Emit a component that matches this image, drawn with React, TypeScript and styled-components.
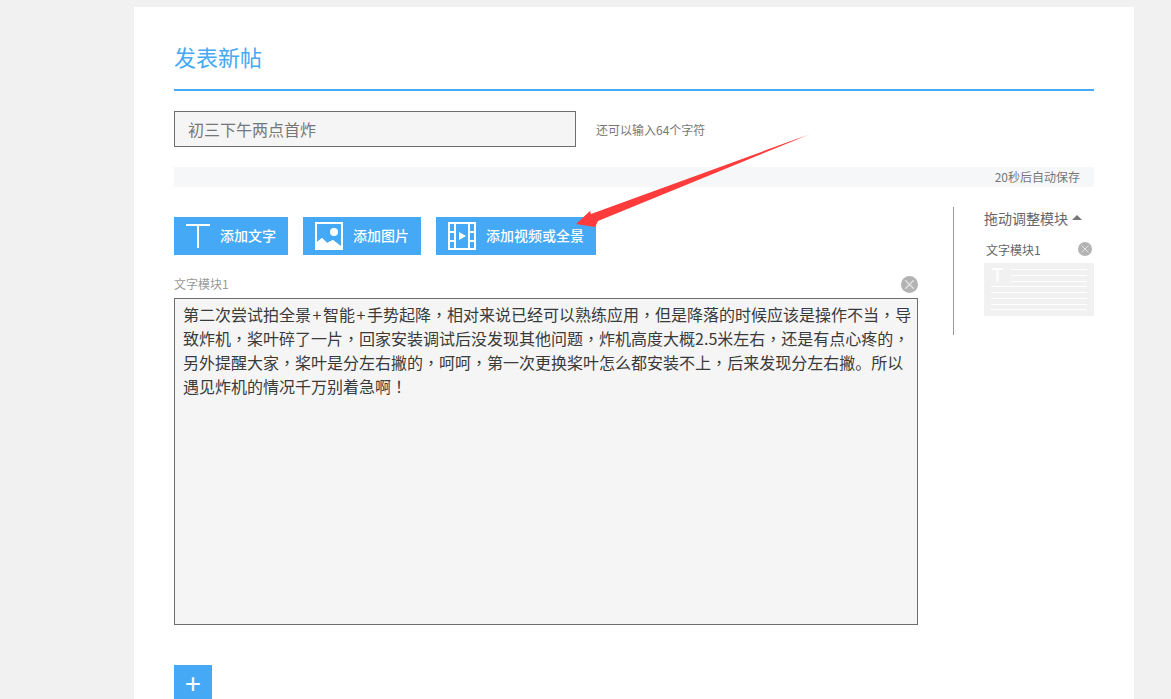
import React from "react";
import styled, { createGlobalStyle } from "styled-components";

const Global = createGlobalStyle`
  html, body { margin: 0; padding: 0; height: 699px; overflow: hidden; background: #f1f1f1; }
  body { font-family: "Liberation Sans", "Noto Sans CJK SC", sans-serif; }
  * { box-sizing: border-box; }
`;

const Page = styled.div`
  position: relative;
  height: 699px;
  overflow: hidden;
  padding: 7px 37px 0 134px;
`;
const Card = styled.main`
  width: 1000px;
  height: 900px;
  background: #fff;
  padding: 0 40px;
`;
const Title = styled.h1`
  margin: 0;
  height: 84px;
  padding-top: 34px;
  font-size: 22px;
  line-height: 36px;
  font-weight: 400;
  color: #45a9f5;
  border-bottom: 2px solid #45a9f5;
`;
const TitleRow = styled.div`
  display: flex;
  align-items: center;
  margin-top: 20px;
  gap: 20px;
`;
const TitleInput = styled.input`
  width: 402px;
  height: 36px;
  border: 1px solid #6e6e6e;
  background: #f5f5f5;
  padding: 0 13px;
  font: 16px "Noto Sans CJK SC", sans-serif;
  color: #777;
  outline: none;
`;
const Hint = styled.span`
  font-size: 12px;
  color: #777;
  font-family: "Noto Sans CJK SC", sans-serif;
`;
const SaveBar = styled.div`
  margin-top: 20px;
  height: 20px;
  background: #f6f7f9;
  text-align: right;
  padding-right: 14px;
  font: 12px/19px "Noto Sans CJK SC", sans-serif;
  color: #777;
`;
const Body = styled.div`
  display: flex;
  justify-content: space-between;
  margin-top: 20px;
`;
const Editor = styled.div`
  width: 744px;
  padding-top: 10px;
`;
const Toolbar = styled.div`
  display: flex;
  gap: 15px;
`;
const AddButton = styled.button<{ $w: number }>`
  width: ${(p) => p.$w}px;
  height: 38px;
  display: flex;
  align-items: center;
  gap: 10px;
  padding: 0 0 0 12px;
  border: 0;
  background: #45a9f5;
  color: #fff;
  font: 500 14px "Noto Sans CJK SC", sans-serif;
`;
const ButtonLabel = styled.span`
  padding-bottom: 2px;
`;
const ModuleHead = styled.div`
  display: flex;
  justify-content: space-between;
  align-items: center;
  height: 18px;
  margin-top: 20px;
  margin-bottom: 5px;
  font: 12px "Noto Sans CJK SC", sans-serif;
  color: #999;
`;
const ModuleLabel = styled.span`
  padding-bottom: 2px;
`;
const Content = styled.div`
  width: 744px;
  height: 327px;
  border: 1px solid #6e6e6e;
  background: #f5f5f5;
  padding: 3px 5px 5px 8px;
  font: 16px/24px "Noto Sans CJK SC", sans-serif;
  color: #3a3a3a;
  text-spacing-trim: space-all;
`;
const Line = styled.div`
  white-space: nowrap;
`;
const Punct = styled.span`
  font-family: "Noto Sans CJK TC", sans-serif;
`;
const PlusSign = styled.span`
  display: inline-block;
  width: 12px;
  text-align: center;
`;
const PlusButton = styled.button`
  display: block;
  width: 38px;
  height: 38px;
  margin-top: 40px;
  padding: 0;
  border: 0;
  background: #45a9f5;
  color: #fff;
  font: 28px/36px "Liberation Sans", sans-serif;
`;
const Side = styled.aside`
  width: 141px;
  height: 128px;
  border-left: 1px solid #999;
  padding: 0 0 0 30px;
`;
const SideHead = styled.div`
  display: flex;
  align-items: center;
  gap: 4px;
  height: 22px;
  font: 14px "Noto Sans CJK SC", sans-serif;
  color: #666;
`;
const Caret = styled.i`
  width: 0;
  height: 0;
  margin-top: -2px;
  border: 5px solid transparent;
  border-top: 0;
  border-bottom: 5px solid #777;
`;
const SideModule = styled.div`
  display: flex;
  justify-content: space-between;
  align-items: center;
  height: 18px;
  margin-top: 11px;
  padding: 0 2px;
  font: 12px "Noto Sans CJK SC", sans-serif;
  color: #666;
`;
const Thumb = styled.svg`
  display: block;
  margin-top: 5px;
`;
const Arrow = styled.svg`
  position: absolute;
  left: 570px;
  top: 130px;
  pointer-events: none;
`;

const CloseIcon = ({ size }: { size: number }) => (
  <svg width={size} height={size} viewBox="0 0 18 18">
    <circle cx="9" cy="9" r="9" fill="#b3b3b3" />
    <path d="M4.5 4.5l9 9M13.5 4.5l-9 9" stroke="#e6e6e6" strokeWidth="1.2" />
  </svg>
);

const lines = [
  "第二次尝试拍全景+智能+手势起降，相对来说已经可以熟练应用，但是降落的时候应该是操作不当，导",
  "致炸机，桨叶碎了一片，回家安装调试后没发现其他问题，炸机高度大概2.5米左右，还是有点心疼的，",
  "另外提醒大家，桨叶是分左右撇的，呵呵，第一次更换桨叶怎么都安装不上，后来发现分左右撇。所以",
  "遇见炸机的情况千万别着急啊！",
];

const renderLine = (line: string) =>
  line.split(/([，！+])/).map((piece, i) => {
    if (piece === "+") return <PlusSign key={i}>+</PlusSign>;
    if (piece === "，" || piece === "！") return <Punct key={i}>{piece}</Punct>;
    return <React.Fragment key={i}>{piece}</React.Fragment>;
  });

export default function App() {
  return (
    <Page>
      <Global />
      <Card>
        <Title>发表新帖</Title>
        <TitleRow>
          <TitleInput readOnly value="初三下午两点首炸" />
          <Hint>还可以输入64个字符</Hint>
        </TitleRow>
        <SaveBar>20秒后自动保存</SaveBar>
        <Body>
          <Editor>
            <Toolbar>
              <AddButton $w={114}>
                <svg width="24" height="24" viewBox="0 0 24 24" fill="none" stroke="#fff" strokeWidth="2">
                  <path d="M0 1h24M12 1v24" />
                </svg>
                <ButtonLabel>添加文字</ButtonLabel>
              </AddButton>
              <AddButton $w={118}>
                <svg width="28" height="28" viewBox="0 0 28 28">
                  <path fill="#fff" fillRule="evenodd" d="M0 0h28v28H0zM2 2v18l5-4 5 5 6-3 8 7V2z" />
                  <path fill="#fff" d="M2 20l5-4 5 5 6-3 8 6v4H2z" />
                  <circle cx="19" cy="10" r="4" fill="#fff" />
                </svg>
                <ButtonLabel>添加图片</ButtonLabel>
              </AddButton>
              <AddButton $w={160}>
                <svg width="28" height="28" viewBox="0 0 28 28" fill="none" stroke="#fff" strokeWidth="2">
                  <path d="M1 1h26v26H1zM7 1v26M21 1v26M1 10h6M1 19h6M21 10h6M21 19h6" />
                  <path d="M11 10l7 4-7 4z" fill="#fff" stroke="none" />
                </svg>
                <ButtonLabel>添加视频或全景</ButtonLabel>
              </AddButton>
            </Toolbar>
            <ModuleHead>
              <ModuleLabel>文字模块1</ModuleLabel>
              <CloseIcon size={17} />
            </ModuleHead>
            <Content>
              {lines.map((line) => (
                <Line key={line}>{renderLine(line)}</Line>
              ))}
            </Content>
            <PlusButton>+</PlusButton>
          </Editor>
          <Side>
            <SideHead>
              拖动调整模块
              <Caret />
            </SideHead>
            <SideModule>
              <span>文字模块1</span>
              <CloseIcon size={14} />
            </SideModule>
            <Thumb width="110" height="53" viewBox="0 0 110 53">
              <rect width="110" height="53" fill="#f1f1f1" />
              <path
                d="M27 6.5h76M27 12.5h76M27 18.5h76M7 23.5h96M7 29.5h96M7 35.5h96M7 41.5h96M7 46.5h96"
                stroke="#fff"
                strokeWidth="1"
              />
              <path d="M8 6h11M13.5 6v13" stroke="#fff" strokeWidth="2" fill="none" />
            </Thumb>
          </Side>
        </Body>
      </Card>
      <Arrow width="250" height="100" viewBox="0 0 250 100">
        <defs>
          <linearGradient id="a" x1="1" y1="0" x2="0" y2="0">
            <stop offset="0" stopColor="#ff3b3b" stopOpacity="0" />
            <stop offset="0.07" stopColor="#ff3b3b" />
          </linearGradient>
        </defs>
        <path d="M6 94L20 81L21 84L243 3L28 91L25 97Z" fill="url(#a)" />
      </Arrow>
    </Page>
  );
}
